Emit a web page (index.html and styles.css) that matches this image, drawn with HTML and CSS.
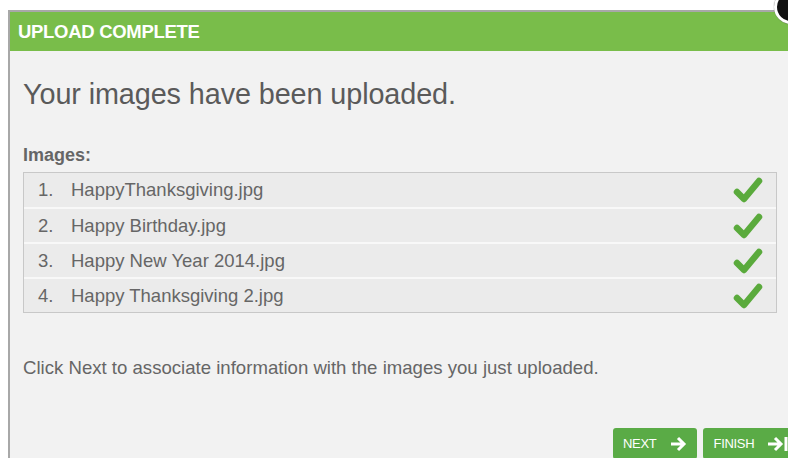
FILE: index.html
```html
<!DOCTYPE html>
<html>
<head>
<meta charset="utf-8">
<link rel="stylesheet" href="styles.css">
</head>
<body>
<div class="dialog">
  <div class="dialog-header">
    <span class="dialog-title">UPLOAD COMPLETE</span>
    <span class="close-btn"></span>
  </div>
  <div class="dialog-body">
    <h1 class="headline">Your images have been uploaded.</h1>
    <div class="list-label">Images:</div>
    <ol class="file-list">
      <li class="file-row"><span class="num">1.</span><span class="name">HappyThanksgiving.jpg</span>
        <svg class="check" viewBox="0 0 30 30"><path d="M4 17 L11 24 L26 6" /></svg></li>
      <li class="file-row"><span class="num">2.</span><span class="name">Happy Birthday.jpg</span>
        <svg class="check" viewBox="0 0 30 30"><path d="M4 17 L11 24 L26 6" /></svg></li>
      <li class="file-row"><span class="num">3.</span><span class="name">Happy New Year 2014.jpg</span>
        <svg class="check" viewBox="0 0 30 30"><path d="M4 17 L11 24 L26 6" /></svg></li>
      <li class="file-row"><span class="num">4.</span><span class="name">Happy Thanksgiving 2.jpg</span>
        <svg class="check" viewBox="0 0 30 30"><path d="M4 17 L11 24 L26 6" /></svg></li>
    </ol>
    <p class="hint">Click Next to associate information with the images you just uploaded.</p>
    <div class="actions">
      <button class="btn">NEXT
        <svg class="btn-icon" viewBox="0 0 20 16"><path d="M2 8 H15 M9 2 L15 8 L9 14" /></svg>
      </button>
      <button class="btn">FINISH
        <svg class="btn-icon" viewBox="0 0 22 16"><path d="M1 8 H14 M8 2 L14 8 L8 14 M19 1 V15" /></svg>
      </button>
    </div>
  </div>
</div>
</body>
</html>
```
FILE: styles.css
```css
html, body {
  margin: 0;
  padding: 0;
  background: #ffffff;
  overflow: hidden;
  width: 788px;
  height: 458px;
}

body {
  font-family: "Liberation Sans", Arial, sans-serif;
}

.dialog {
  margin: 10px 0 0 8px;
  width: 800px;
  height: 448px;
  overflow: visible;
  border-top: 2px solid #a8a8a8;
  border-left: 2px solid #a8a8a8;
  background: #f2f2f2;
}

.dialog-header {
  position: relative;
  height: 39px;
  background: #79bd4a;
  display: flex;
  align-items: center;
  padding-left: 8px;
}

.dialog-title {
  color: #ffffff;
  font-weight: bold;
  font-size: 18.5px;
  letter-spacing: -0.3px;
  padding-top: 1px;
}

.close-btn {
  position: absolute;
  left: 764px;
  top: -22px;
  width: 28px;
  height: 28px;
  border-radius: 50%;
  background: #111;
  border: 3px solid #fff;
  box-shadow: 0 0 1px #555;
}

.dialog-body {
  padding: 0 0 0 13px;
}

.headline {
  margin: 0;
  padding-top: 25px;
  font-size: 28.8px;
  font-weight: normal;
  color: #5a5a5a;
  line-height: 36px;
  letter-spacing: -0.1px;
}

.list-label {
  margin-top: 33px;
  font-size: 18px;
  font-weight: bold;
  color: #666;
  line-height: 21px;
}

.file-list {
  list-style: none;
  margin: 6px 0 0 0;
  padding: 0;
  width: 752px;
  border: 1px solid #c8c8c8;
  background: #ebebeb;
}

.file-row {
  box-sizing: border-box;
  display: flex;
  align-items: center;
  height: 35px;
  font-size: 18.5px;
  color: #666;
  border-top: 2px solid #f8f8f8;
}

.file-row:first-child {
  border-top: none;
  height: 34px;
}

.num {
  width: 33px;
  padding-left: 14px;
}

.name {
  flex: 1;
}

.check {
  width: 30px;
  height: 30px;
  margin-right: 13px;
}

.check path {
  fill: none;
  stroke: #5aaa3c;
  stroke-width: 6.5;
  stroke-linecap: round;
  stroke-linejoin: round;
}

.hint {
  margin: 44px 0 0 0;
  font-size: 18.6px;
  color: #666;
  line-height: 22px;
}

.actions {
  display: flex;
  gap: 6px;
  margin-top: 49px;
  padding-left: 590px;
}

.btn {
  display: flex;
  align-items: center;
  gap: 13px;
  height: 31px;
  padding: 0 8px 0 10px;
  border: none;
  border-radius: 3px;
  background: #5aab46;
  color: #fff;
  font-family: "Liberation Sans Narrow", "Liberation Sans", Arial, sans-serif;
  font-size: 13px;
  letter-spacing: -0.3px;
}

.btn-icon {
  width: 20px;
  height: 16px;
}

.btn:last-child .btn-icon {
  width: 22px;
}

.btn-icon path {
  fill: none;
  stroke: #fff;
  stroke-width: 3;
  stroke-linecap: butt;
  stroke-linejoin: miter;
}
```
